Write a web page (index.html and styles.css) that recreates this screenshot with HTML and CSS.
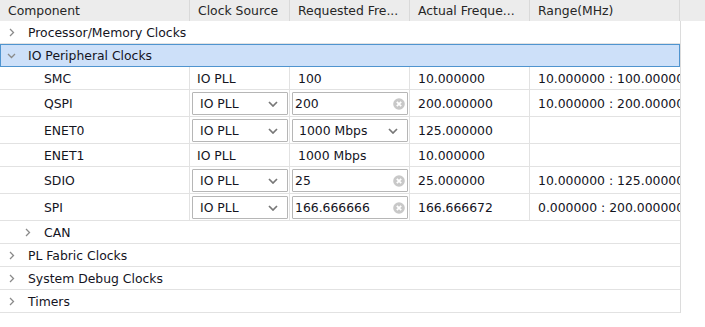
FILE: index.html
```html
<!DOCTYPE html>
<html lang="en">
<head>
    <meta charset="UTF-8">
    <title>Clock Configuration</title>
    <link rel="stylesheet" href="styles.css">
</head>
<body>
    <div class="header">
        <div class="hcell c1">Component</div>
        <div class="hcell c2">Clock Source</div>
        <div class="hcell c3">Requested Fre...</div>
        <div class="hcell c4">Actual Freque...</div>
        <div class="hcell c5">Range(MHz)</div>
    </div>

    <div class="tree">
        <div class="group">
            <span class="arrow"><svg width="6" height="9" viewBox="0 0 6 9"><path d="M1 1l3.5 3.5L1 8" fill="none" stroke="#8a8a8a" stroke-width="1.3"/></svg></span>
            Processor/Memory Clocks
        </div>
        <div class="group selected">
            <span class="arrow"><svg width="9" height="6" viewBox="0 0 9 6"><path d="M1 1l3.5 3.5L8 1" fill="none" stroke="#8a8a8a" stroke-width="1.3"/></svg></span>
            IO Peripheral Clocks
        </div>

        <div class="row">
            <div class="cell c1 child">SMC</div>
            <div class="cell c2 plain">IO PLL</div>
            <div class="cell c3 plain">100</div>
            <div class="cell c4">10.000000</div>
            <div class="cell c5">10.000000 : 100.000000</div>
        </div>
        <div class="row tall">
            <div class="cell c1 child">QSPI</div>
            <div class="cell c2"><div class="combo">IO PLL<svg class="drop" width="10" height="6" viewBox="0 0 10 6"><path d="M1 1l4 4 4-4" fill="none" stroke="#777" stroke-width="1.7"/></svg></div></div>
            <div class="cell c3"><div class="field">200<svg class="clear" width="12" height="12" viewBox="0 0 12 12"><circle cx="6" cy="6" r="5.8" fill="#c8c8c8"/><path d="M3.8 3.8l4.4 4.4M8.2 3.8l-4.4 4.4" stroke="#fff" stroke-width="1.7"/></svg></div></div>
            <div class="cell c4">200.000000</div>
            <div class="cell c5">10.000000 : 200.000000</div>
        </div>
        <div class="row tall">
            <div class="cell c1 child">ENET0</div>
            <div class="cell c2"><div class="combo">IO PLL<svg class="drop" width="10" height="6" viewBox="0 0 10 6"><path d="M1 1l4 4 4-4" fill="none" stroke="#777" stroke-width="1.7"/></svg></div></div>
            <div class="cell c3"><div class="field combo-field">1000 Mbps<svg class="drop" width="10" height="6" viewBox="0 0 10 6"><path d="M1 1l4 4 4-4" fill="none" stroke="#777" stroke-width="1.7"/></svg></div></div>
            <div class="cell c4">125.000000</div>
            <div class="cell c5"></div>
        </div>
        <div class="row">
            <div class="cell c1 child">ENET1</div>
            <div class="cell c2 plain">IO PLL</div>
            <div class="cell c3 plain">1000 Mbps</div>
            <div class="cell c4">10.000000</div>
            <div class="cell c5"></div>
        </div>
        <div class="row tall">
            <div class="cell c1 child">SDIO</div>
            <div class="cell c2"><div class="combo">IO PLL<svg class="drop" width="10" height="6" viewBox="0 0 10 6"><path d="M1 1l4 4 4-4" fill="none" stroke="#777" stroke-width="1.7"/></svg></div></div>
            <div class="cell c3"><div class="field">25<svg class="clear" width="12" height="12" viewBox="0 0 12 12"><circle cx="6" cy="6" r="5.8" fill="#c8c8c8"/><path d="M3.8 3.8l4.4 4.4M8.2 3.8l-4.4 4.4" stroke="#fff" stroke-width="1.7"/></svg></div></div>
            <div class="cell c4">25.000000</div>
            <div class="cell c5">10.000000 : 125.000000</div>
        </div>
        <div class="row tall">
            <div class="cell c1 child">SPI</div>
            <div class="cell c2"><div class="combo">IO PLL<svg class="drop" width="10" height="6" viewBox="0 0 10 6"><path d="M1 1l4 4 4-4" fill="none" stroke="#777" stroke-width="1.7"/></svg></div></div>
            <div class="cell c3"><div class="field">166.666666<svg class="clear" width="12" height="12" viewBox="0 0 12 12"><circle cx="6" cy="6" r="5.8" fill="#c8c8c8"/><path d="M3.8 3.8l4.4 4.4M8.2 3.8l-4.4 4.4" stroke="#fff" stroke-width="1.7"/></svg></div></div>
            <div class="cell c4">166.666672</div>
            <div class="cell c5">0.000000 : 200.000000</div>
        </div>

        <div class="group sub">
            <span class="arrow"><svg width="6" height="9" viewBox="0 0 6 9"><path d="M1 1l3.5 3.5L1 8" fill="none" stroke="#8a8a8a" stroke-width="1.3"/></svg></span>
            CAN
        </div>
        <div class="group">
            <span class="arrow"><svg width="6" height="9" viewBox="0 0 6 9"><path d="M1 1l3.5 3.5L1 8" fill="none" stroke="#8a8a8a" stroke-width="1.3"/></svg></span>
            PL Fabric Clocks
        </div>
        <div class="group">
            <span class="arrow"><svg width="6" height="9" viewBox="0 0 6 9"><path d="M1 1l3.5 3.5L1 8" fill="none" stroke="#8a8a8a" stroke-width="1.3"/></svg></span>
            System Debug Clocks
        </div>
        <div class="group">
            <span class="arrow"><svg width="6" height="9" viewBox="0 0 6 9"><path d="M1 1l3.5 3.5L1 8" fill="none" stroke="#8a8a8a" stroke-width="1.3"/></svg></span>
            Timers
        </div>
    </div>
</body>
</html>
```

FILE: styles.css
```css
body{
    margin: 0;
    background-color: white;
    font-family: "DejaVu Sans", sans-serif;
    font-size: 12.4px;
    color: #14141e;
}

.header{
    display: flex;
    height: 21px;
    background-color: #ececec;
    color: #262626;
}

.hcell{
    display: flex;
    align-items: center;
    padding-left: 8px;
    box-sizing: border-box;
    border-right: 1px solid #d9d9d9;
    white-space: nowrap;
    overflow: hidden;
}

.c1{ width: 190px; }
.c2{ width: 100px; }
.c3{ width: 120px; }
.c4{ width: 120px; }
.c5{ width: 150px; }

.tree{
    width: 681px;
    box-sizing: border-box;
    border-right: 1px solid #dcdcdc;
}

.group{
    display: flex;
    align-items: center;
    height: 23px;
    box-sizing: border-box;
    border-bottom: 1px solid #e2e2e2;
    padding-left: 7px;
    white-space: nowrap;
}

.group.sub{
    padding-left: 23px;
}

.group.selected{
    background-color: #cde0f9;
    border: 1px solid #4f94cf;
    padding-left: 6px;
}

.arrow{
    display: flex;
    justify-content: center;
    align-items: center;
    width: 9px;
    margin-right: 12px;
}

.row{
    display: flex;
    height: 23px;
    box-sizing: border-box;
    border-bottom: 1px solid #e2e2e2;
}

.row.tall{
    height: 27px;
}

.cell{
    display: flex;
    align-items: center;
    box-sizing: border-box;
    border-right: 1px solid #e2e2e2;
    padding-left: 8px;
    white-space: nowrap;
    overflow: hidden;
}

.row .c5{
    border-right: none;
    width: 150px;
}

.cell.child{
    padding-left: 44px;
}

.cell.plain.c2{
    padding-left: 7px;
}

.row.tall .c2,
.row.tall .c3{
    padding: 1px 1px 0 2px;
}

.combo,
.field{
    display: flex;
    align-items: center;
    width: 100%;
    height: 23px;
    box-sizing: border-box;
    border: 1px solid #b6b6b6;
    border-radius: 1px;
    background-color: white;
}

.combo{
    padding-left: 7px;
}

.field{
    padding-left: 2px;
}

.combo-field{
    padding-left: 6px;
}

.drop{
    margin-left: auto;
    margin-right: 9px;
}

.clear{
    margin-left: auto;
    margin-right: 2px;
}
```
